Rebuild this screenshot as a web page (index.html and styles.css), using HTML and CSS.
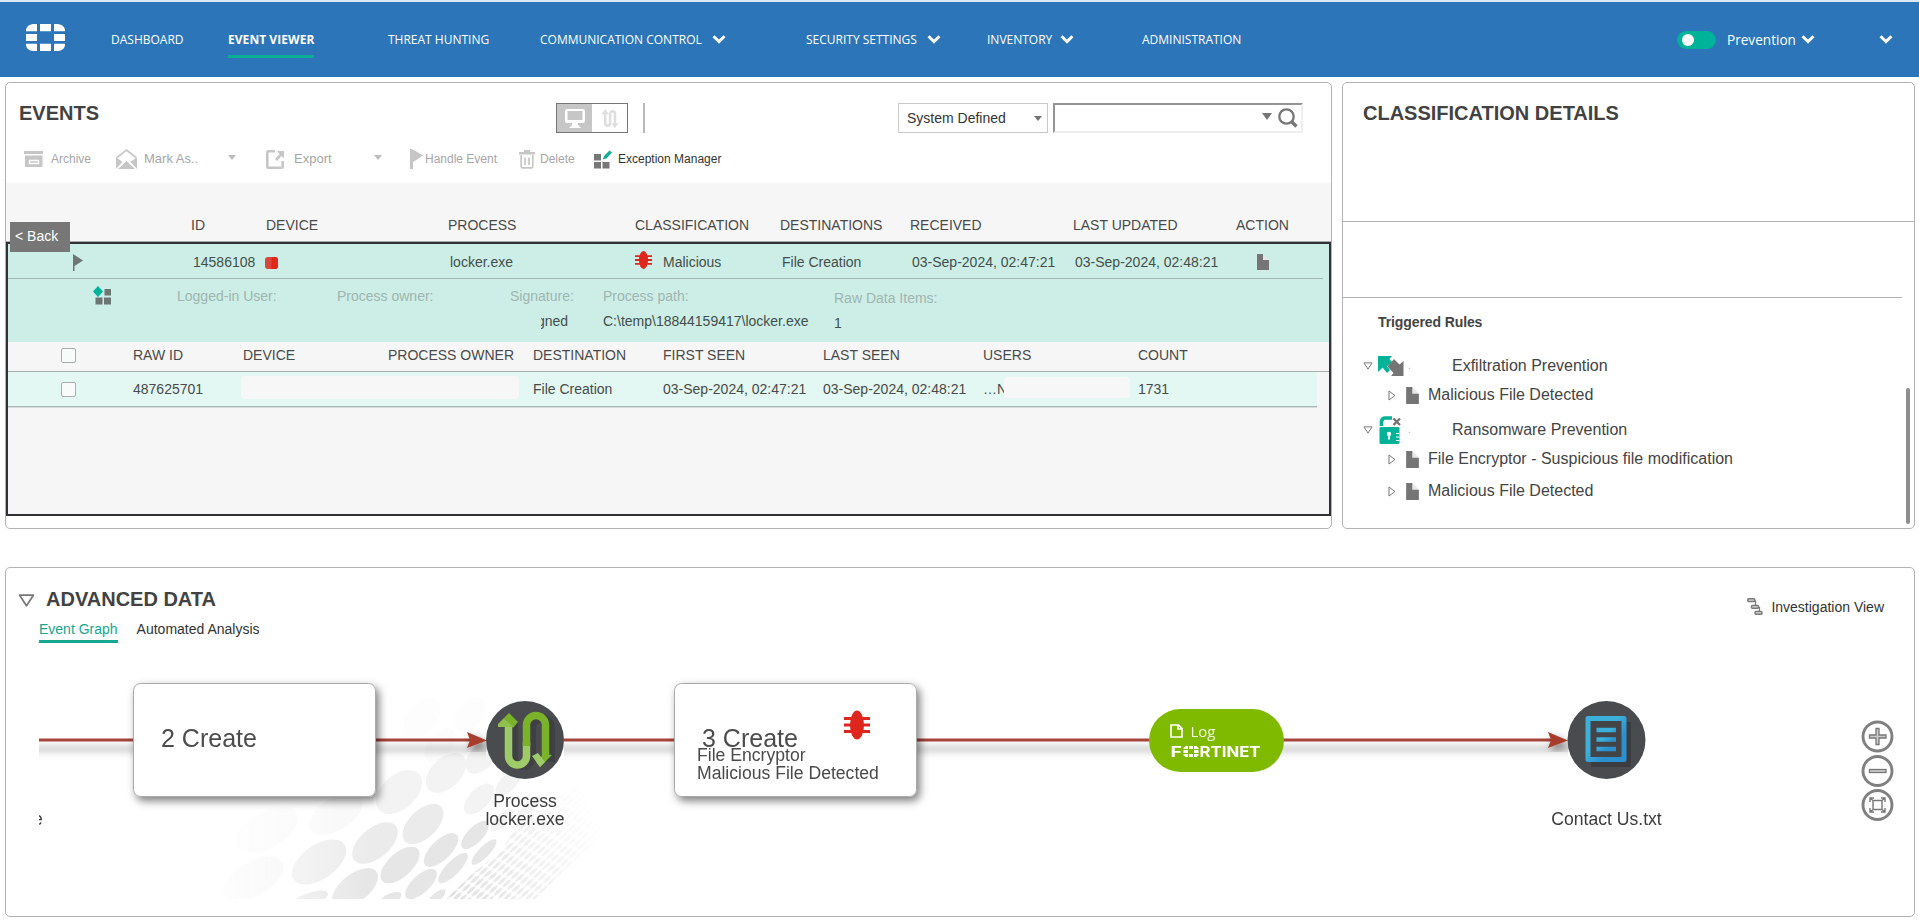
FILE: index.html
```html
<!DOCTYPE html>
<html lang="en">
<head>
<meta charset="utf-8">
<title>Event Viewer</title>
<link rel="stylesheet" href="styles.css">
</head>
<body>
<svg class="defs" width="0" height="0" aria-hidden="true">
  <symbol id="chev" viewBox="0 0 13 10"><path d="M1.400 2 6.500 7 11.600 2" fill="none" stroke="#fff" stroke-width="2.700"/></symbol>
  <symbol id="doc" viewBox="0 0 12 16"><path d="M0 0H6V6H12V16H0Z" fill="#757575"/><path d="M6 0 12 6H6Z" fill="#e6e6e6"/></symbol>
  <symbol id="bug" viewBox="0 0 26 30"><ellipse cx="13" cy="15" rx="7" ry="14.5" fill="#df261c"/><path d="M0 8.500H26M0 15H26M0 21.500H26" stroke="#df261c" stroke-width="3"/></symbol>
  <symbol id="snake" viewBox="0 0 16 18"><path d="M3.500 4V13.500a2.300 2.300 0 0 0 4.600 0V4.500a2.300 2.300 0 0 1 4.600 0V14" fill="none" stroke="#dedede" stroke-width="2.400"/><path d="M0 5 3.500 0 7 5ZM9.200 13.500H16L12.700 18Z" fill="#dedede"/></symbol>
  <symbol id="right" viewBox="0 0 8 11"><path d="M1 1V10L7 5.500Z" fill="#fff" stroke="#777"/></symbol>
  <symbol id="down" viewBox="0 0 16 12"><path d="M1.500 1H14.500L8 11Z" fill="#fff" stroke="#777" stroke-width="1.600" stroke-linejoin="round"/></symbol>
</svg>

<header class="topbar">
  <svg class="logo" width="39" height="27" viewBox="0 0 39 34" preserveAspectRatio="none"><path fill="#fff" d="M7 0H11V9H0V7Q1 1 7 0ZM14 0H25V9H14ZM28 0H32Q38 1 39 7V9H28ZM0 12.500H11V21.500H0ZM28 12.500H39V21.500H28ZM0 25H11V34H7Q1 33 0 27ZM14 25H25V34H14ZM28 25H39V27Q38 33 32 34H28Z"/></svg>
  <nav class="nav">
    <a>DASHBOARD</a>
    <a><span class="current">EVENT VIEWER</span></a>
    <a>THREAT HUNTING</a>
    <a>COMMUNICATION CONTROL<svg class="chev"><use href="#chev"/></svg></a>
    <a>SECURITY SETTINGS<svg class="chev"><use href="#chev"/></svg></a>
    <a>INVENTORY<svg class="chev"><use href="#chev"/></svg></a>
    <a>ADMINISTRATION</a>
  </nav>
  <div class="mode"><span class="switch"></span>Prevention<svg class="chev"><use href="#chev"/></svg></div>
  <svg class="chev user"><use href="#chev"/></svg>
</header>

<main class="page">
  <section class="panel events">
    <div class="head">
      <h2>EVENTS</h2>
      <div class="views">
        <span class="view on"><svg width="20" height="19" viewBox="0 0 20 19"><path fill="#fff" fill-rule="evenodd" d="M2 0H18Q20 0 20 2V12Q20 14 18 14H13V16L16 19H4L7 16V14H2Q0 14 0 12V2Q0 0 2 0ZM2.500 2V11H17.500V2Z"/></svg></span>
        <span class="view"><svg width="18" height="19"><use href="#snake"/></svg></span>
      </div>
      <i class="divider"></i>
      <div class="select">System Defined<i class="tri"></i></div>
      <div class="search"><i class="tri big"></i><svg width="20" height="20" viewBox="0 0 20 20"><circle cx="8.500" cy="8.500" r="7.200" fill="none" stroke="#777" stroke-width="2.300"/><path d="M13.500 13.500 18.500 18.500" stroke="#777" stroke-width="3.200"/></svg></div>
    </div>
    <div class="tools">
      <div><svg width="19" height="16" viewBox="0 0 19 16"><path fill="#c6c6c6" d="M0 0H19V3H0ZM1 4.500H18.500V16H1Z"/><path d="M5.500 9.500V12.500H14.500V9.500Z" fill="none" stroke="#fff" stroke-width="1.400"/></svg><span>Archive</span></div>
      <div class="t13"><svg width="21" height="20" viewBox="0 0 21 20"><path d="M1 8.500 10.500 1 20 8.500" fill="none" stroke="#c6c6c6" stroke-width="1.600"/><path fill="#c6c6c6" d="M0 8 6.500 13 0 20ZM21 8 14.500 13 21 20ZM2 20 10.500 12 19 20Z"/></svg><span>Mark As..</span><i class="tri pale"></i></div>
      <div class="t13"><svg width="19" height="19" viewBox="0 0 19 19"><path d="M9 1.300H2.500Q1.300 1.300 1.300 2.500V16.500Q1.300 17.700 2.500 17.700H15.500Q16.700 17.700 16.700 16.500V11" fill="none" stroke="#c6c6c6" stroke-width="2.600"/><path d="M11 1H18V8.500L15.500 6 11 11 9 9 13.500 4Z" fill="#c6c6c6"/></svg><span>Export</span><i class="tri pale"></i></div>
      <div><svg width="14" height="20" viewBox="0 0 14 20"><path fill="#c6c6c6" d="M0 0H2L13 6.500 3 13V20H0Z"/></svg><span>Handle Event</span></div>
      <div><svg width="16" height="19" viewBox="0 0 16 19"><path fill="#c6c6c6" d="M0 2H5V0H11V2H16V4.500H0Z"/><path d="M2.200 5V16.500Q2.200 17.900 3.500 17.900H12.500Q13.800 17.900 13.800 16.500V5M6 7.500V15M10 7.500V15" fill="none" stroke="#c6c6c6" stroke-width="1.700"/></svg><span>Delete</span></div>
      <div class="dark"><svg width="19" height="19" viewBox="0 0 19 19"><path fill="#777" d="M0 4H7V10.500H0ZM0 12H7V18.500H0ZM8.500 12H15.500V18.500H8.500Z"/><path d="M8.800 9.600 10 6 15.500 0.500 18 2.500 12.500 8.500Z" fill="#17ae92"/></svg><span>Exception Manager</span></div>
    </div>

    <div class="table">
      <div class="row cols main-head"><span></span><span>ID</span><span>DEVICE</span><span>PROCESS</span><span>CLASSIFICATION</span><span>DESTINATIONS</span><span>RECEIVED</span><span>LAST UPDATED</span><span>ACTION</span></div>
      <div class="back">&lt; Back</div>
      <div class="selected">
        <div class="row cols event">
          <span class="flag"><svg width="11" height="17" viewBox="0 0 11 17"><path fill="#6e7673" d="M0 0 10 6.500 1.500 12V17H0Z"/></svg></span>
          <span>14586108</span>
          <span><svg class="dev" width="13" height="12" viewBox="0 0 13 12"><rect width="13" height="12" rx="3" fill="#d8463c"/><path d="M6.500 0H10Q13 0 13 3V9Q13 12 10 12H6.500Z" fill="#e02718"/></svg></span>
          <span>locker.exe</span>
          <span class="mal"><svg width="17" height="18" viewBox="0 0 26 30" preserveAspectRatio="none"><ellipse cx="13" cy="15" rx="7" ry="15" fill="#df261c"/><path d="M0 8.500H26M0 15H26M0 21.500H26" stroke="#df261c" stroke-width="3"/></svg>Malicious</span>
          <span>File Creation</span><span>03-Sep-2024, 02:47:21</span><span>03-Sep-2024, 02:48:21</span>
          <span class="act"><svg width="12" height="16"><use href="#doc"/></svg></span>
        </div>
        <div class="detail">
          <span class="apps"><svg width="18" height="19" viewBox="0 0 18 19"><path fill="#00b398" d="M5 0 10 5.500 5 11 0 5.500Z"/><path fill="#6e7673" d="M11.500 3H18V9.500H11.500ZM2.500 11.500H9.500V18.500H2.500ZM11 11.500H18V18.500H11Z"/></svg></span>
          <dl><dt>Logged-in User:</dt><dd></dd></dl>
          <dl><dt>Process owner:</dt><dd></dd></dl>
          <dl><dt>Signature:</dt><dd class="cut"><span>gned</span></dd></dl>
          <dl><dt>Process path:</dt><dd>C:\temp\18844159417\locker.exe</dd></dl>
          <dl class="low"><dt>Raw Data Items:</dt><dd>1</dd></dl>
        </div>
        <div class="row sub sub-head"><span><i class="box"></i></span><span>RAW ID</span><span>DEVICE</span><span>PROCESS OWNER</span><span>DESTINATION</span><span>FIRST SEEN</span><span>LAST SEEN</span><span>USERS</span><span>COUNT</span></div>
        <div class="row sub raw"><span><i class="box"></i></span><span>487625701</span><span class="blank"></span><span>File Creation</span><span>03-Sep-2024, 02:47:21</span><span>03-Sep-2024, 02:48:21</span><span class="users">…N<i></i></span><span>1731</span></div>
      </div>
    </div>
  </section>

  <section class="panel details">
    <h2>CLASSIFICATION DETAILS</h2>
    <div class="gap"></div>
    <div class="rules">
      <h3>Triggered Rules</h3>
      <div class="rule r1"><svg width="10" height="8"><use href="#down"/></svg><svg width="26" height="20" viewBox="0 0 26 20"><path fill="#00b398" d="M0 0H14L11.500 3 14 6 9 10.500 12 14 9 17 4.500 11.500 0 16Z"/><path fill="#757575" d="M16 3 21.500 8.500 25.500 5V20H13L15.500 17 9.500 10.500Z"/></svg><small>.</small><span>Exfiltration Prevention</span></div>
      <div class="item i1"><svg width="8" height="11"><use href="#right"/></svg><svg width="13" height="17"><use href="#doc"/></svg>Malicious File Detected</div>
      <div class="rule r2"><svg width="10" height="8"><use href="#down"/></svg><svg width="26" height="28" viewBox="0 0 26 28"><path d="M3.500 10V5.500Q4 2 7.500 2H14" fill="none" stroke="#00b398" stroke-width="3.600"/><rect x="1.500" y="11" width="20" height="17" rx="1.500" fill="#00b398"/><path d="M15.500 2.500 22 9M22 2.500 15.500 9" stroke="#757575" stroke-width="2.400"/><circle cx="11" cy="18" r="2.200" fill="#fff"/><path d="M10.200 18H11.800L12 23.500H10ZM18 17H21.500V18H18ZM18 20.500H21.500V21.500H18ZM18 24H21.500V25H18Z" fill="#fff"/></svg><small>.</small><span>Ransomware Prevention</span></div>
      <div class="item i1"><svg width="8" height="11"><use href="#right"/></svg><svg width="13" height="17"><use href="#doc"/></svg>File Encryptor - Suspicious file modification</div>
      <div class="item i2"><svg width="8" height="11"><use href="#right"/></svg><svg width="13" height="17"><use href="#doc"/></svg>Malicious File Detected</div>
      <i class="thumb"></i>
    </div>
  </section>

  <section class="panel advanced">
    <div class="adv-head">
      <div>
        <h2><svg width="17" height="13"><use href="#down"/></svg>ADVANCED DATA</h2>
        <div class="tabs"><span class="tab on">Event Graph</span><span class="tab">Automated Analysis</span></div>
      </div>
      <div class="inv"><svg width="17" height="18" viewBox="0 0 17 18"><path d="M8.500 2.500V7M12.500 9V13" stroke="#777" stroke-width="1.200" fill="none"/><g fill="#ddd" stroke="#777" stroke-width="1.500"><rect x=".8" y=".8" width="7" height="2.800" rx="1"/><rect x="4.500" y="7.400" width="7" height="2.800" rx="1"/><rect x="8" y="13.400" width="7" height="2.800" rx="1"/></g></svg>Investigation View</div>
    </div>
    <svg class="graph" viewBox="39 660 1870 239" width="1870" height="239">
      <defs>
        <filter id="sh" x="-10%" y="-15%" width="125%" height="140%"><feDropShadow dx="3" dy="4" stdDeviation="4" flood-color="#000" flood-opacity=".5"/></filter>
        <filter id="soft" filterUnits="userSpaceOnUse" x="30" y="730" width="1560" height="40"><feGaussianBlur stdDeviation="0 3"/></filter>
        <linearGradient id="blue" x1="0" y1="0" x2="1" y2="1"><stop offset=".4" stop-color="#3bb0db"/><stop offset=".7" stop-color="#2c8fcf"/></linearGradient>
        <linearGradient id="fade" gradientUnits="userSpaceOnUse" x1="445" y1="890" x2="600" y2="820"><stop offset="0" stop-color="#fff"/><stop offset="1" stop-color="#fff" stop-opacity="0"/></linearGradient>
        <linearGradient id="left" gradientUnits="userSpaceOnUse" x1="200" y1="0" x2="370" y2="0"><stop offset="0" stop-color="#fff" stop-opacity="0"/><stop offset="1" stop-color="#fff"/></linearGradient>
        <mask id="fm"><rect x="400" y="750" width="240" height="150" fill="url(#fade)"/></mask>
        <mask id="lm"><rect x="180" y="660" width="460" height="240" fill="url(#left)"/></mask>
        <pattern id="fine" width="12" height="5" patternUnits="userSpaceOnUse" patternTransform="rotate(-44) skewX(18)"><ellipse cx="6" cy="2.500" rx="5.600" ry="1.600" fill="#e0e0e0"/></pattern>
      </defs>
      <g class="dots" mask="url(#lm)">
        <g opacity=".35"><ellipse transform="translate(267 830) rotate(-30)" rx="34" ry="18"/><ellipse transform="translate(336 814) rotate(-32)" rx="30" ry="16"/><ellipse transform="translate(422 718) rotate(-50)" rx="23" ry="14" opacity=".4"/><ellipse transform="translate(470 714) rotate(-50)" rx="20" ry="12" opacity=".4"/><ellipse transform="translate(440 745) rotate(-50)" rx="20" ry="12" opacity=".3"/></g>
        <g opacity=".6"><ellipse transform="translate(253 879) rotate(-30)" rx="34" ry="17"/><ellipse transform="translate(399 792) rotate(-42)" rx="27" ry="17"/><ellipse transform="translate(446 773) rotate(-44)" rx="24" ry="15"/><ellipse transform="translate(482 757) rotate(-46)" rx="20" ry="12"/><ellipse transform="translate(479 799) rotate(-46)" rx="19" ry="10"/><ellipse transform="translate(508 783) rotate(-45)" rx="16" ry="8"/><ellipse transform="translate(502 820) rotate(-46)" rx="15" ry="6"/><ellipse transform="translate(530 806) rotate(-44)" rx="14" ry="5"/></g>
        <ellipse transform="translate(319 862) rotate(-35)" rx="31" ry="17"/><ellipse transform="translate(375 843) rotate(-40)" rx="27" ry="15"/><ellipse transform="translate(423 824) rotate(-44)" rx="25" ry="14"/>
        <g fill="#e6e6e6"><ellipse transform="translate(309 900) rotate(-20)" rx="20" ry="7"/><ellipse transform="translate(355 888) rotate(-38)" rx="27" ry="14"/><ellipse transform="translate(400 865) rotate(-42)" rx="24" ry="12"/><ellipse transform="translate(441 850) rotate(-44)" rx="22" ry="10"/><ellipse transform="translate(475 835) rotate(-46)" rx="18" ry="8"/><ellipse transform="translate(388 901) rotate(-30)" rx="15" ry="6"/><ellipse transform="translate(421 884) rotate(-43)" rx="20" ry="9"/><ellipse transform="translate(453 868) rotate(-46)" rx="20" ry="7"/><ellipse transform="translate(484 852) rotate(-46)" rx="17" ry="5.500"/><ellipse transform="translate(436 898) rotate(-42)" rx="12" ry="4.500"/></g>
        <path d="M446 899 472 874 502 850 516 826 590 776 612 795 600 835 535 899Z" fill="url(#fine)" mask="url(#fm)"/>
      </g>
      <path d="M39 749H376M376 749H486M564 749H674M916 749H1568" stroke="#000" stroke-opacity=".16" stroke-width="8" filter="url(#soft)"/>
      <path d="M39 740H133M376 740H480M564 740H674M916 740H1560" stroke="#a5443a" stroke-width="2.800"/>
      <g fill="#a83e2f" filter="url(#sh)"><path d="M467 732 487 740.500 467 748 470 740ZM1548 732 1568 740.500 1548 748 1551 740Z"/></g>
      <g fill="#fff" stroke="#aaa" filter="url(#sh)"><rect x="133.500" y="683.500" width="242" height="113" rx="7"/><rect x="674.500" y="683.500" width="242" height="113" rx="7"/></g>
      <g class="big-text"><text x="161" y="747">2 Create</text><text x="702" y="747">3 Create</text></g>
      <g class="mid-text"><text x="697" y="761">File Encryptor</text><text x="697" y="779">Malicious File Detected</text></g>
      <use href="#bug" x="844" y="710" width="26" height="30"/>
      <g fill="#4a4b4f"><circle cx="525" cy="740" r="39"/><circle cx="1606.500" cy="740" r="39"/></g>
      <path d="M514 722V757a9 9 0 0 0 18 0V728a9.500 9.500 0 0 1 19 0V762" fill="none" stroke="#3f4044" stroke-width="8"/>
      <g fill="none" stroke-width="7.500"><path d="M508.500 722V756a9 9 0 0 0 18 0V742" stroke="#9fca68"/><path d="M526.500 746V725a9.500 9.500 0 0 1 19 0V757" stroke="#7ab32a"/></g>
      <path d="M509 713 518 722 513 728 504 718Z" fill="#7ab32a"/><path d="M504 718 513 727H498V724Z" fill="#8fbf4c"/><path d="M552 755 540 767 536 762 544 754Z" fill="#7ab32a"/><path d="M532 756 538 753 545 762 540 767Z" fill="#9fca68"/>
      <path d="M1591 722H1631V767H1591Z" fill="#3b3c40"/>
      <path d="M1588 718.500H1624V759.500H1588Z" fill="#434448" stroke="url(#blue)" stroke-width="5" stroke-linejoin="round"/>
      <path d="M1596.500 727.700H1616V732.300H1596.500ZM1596.500 737.200H1616V741.800H1596.500ZM1596.500 746.700H1616V751.300H1596.500Z" fill="url(#blue)"/>
      <g class="label"><text x="525" y="807">Process</text><text x="525" y="825">locker.exe</text><text x="1606.500" y="825">Contact Us.txt</text><text x="38" y="825">e</text></g>
      <rect x="1149" y="709" width="135" height="63" rx="31.500" fill="#80ba00"/>
      <path d="M1171 725H1178.500L1182 728.500V737H1171ZM1178 725V729H1182" fill="none" stroke="#fff" stroke-width="1.700"/>
      <text class="log" x="1190.500" y="737">Log</text>
      <g class="brand"><text x="1170.500" y="757" textLength="11.500" lengthAdjust="spacingAndGlyphs">F</text><text x="1199.500" y="757" textLength="61" lengthAdjust="spacingAndGlyphs">RTINET</text></g>
      <path fill="#fff" d="M1186 746H1188V749H1183.500V748ZM1189 746H1193V749H1189ZM1194 746H1196.500L1198.500 748V749H1194ZM1183.500 750H1188V753H1183.500ZM1194 750H1198.500V753H1194ZM1183.500 754H1188V757H1186L1183.500 755.500ZM1189 754H1193V757H1189ZM1194 754H1198.500V755.500L1196.500 757H1194Z"/>
      <g fill="#fff" stroke="#808080" stroke-width="2.900"><circle cx="1877.500" cy="736.500" r="14.500"/><circle cx="1877.500" cy="771" r="14.500"/><circle cx="1877.500" cy="805" r="14.500"/></g>
      <g fill="#ccc" stroke="#777" stroke-width="1.300"><path d="M1876 728.500H1879V735H1886V738H1879V744.500H1876V738H1869.500V735H1876Z"/><rect x="1869.500" y="769.500" width="16.500" height="3"/></g>
      <path d="M1873 800.500H1882V809.500H1873ZM1873 800.500 1870 798M1882 800.500 1885 798M1873 809.500 1870 812M1882 809.500 1885 812M1870 802V798H1874M1881 798H1885V802M1870 808V812H1874M1881 812H1885V808" fill="none" stroke="#777" stroke-width="1.400"/>
    </svg>
  </section>
</main>
</body>
</html>
```

FILE: styles.css
```css
* { box-sizing: border-box; }
body { margin: 0; height: 920px; overflow: hidden; background: #fff; color: #444; font: 14px/18px "Liberation Sans", Arial, sans-serif; white-space: nowrap; }
h2, h3, dl, dd { margin: 0; }
svg { display: block; flex: none; }
.defs { position: absolute; }
h2 { font-size: 20px; line-height: 24px; color: #424242; }

.topbar { display: flex; align-items: center; height: 77px; border-top: 2px solid #dbe9f5; background: #2b75b8; color: #fff; padding-left: 26px; font-family: "Open Sans", sans-serif; }
.logo { margin: 0 46px 4px 0; }
.nav { display: grid; grid-template-columns: 117px 160px 152px 266px 181px 155px 536px; font-size: 12px; }
.nav a { display: flex; align-items: center; height: 32px; }
.chev { width: 14px; height: 11px; margin-left: 10px; }
.nav a:nth-child(6) .chev { margin-left: 8px; }
.current { font-weight: 700; border-bottom: 3px solid #0aae94; padding: 9px 0 6px; letter-spacing: .05px; }
.mode { display: flex; align-items: center; font-size: 13.600px; width: 202px; margin-left: -1px; }
.mode .chev { margin-left: 5px; }
.user { margin-left: 0; }
.switch { width: 39px; height: 18px; border-radius: 9px; background: #00b398; margin-right: 11px; padding: 3px 5px; }
.switch::before { content: ""; display: block; width: 12px; height: 12px; border-radius: 50%; background: #fff; }

.page { display: grid; grid-template-columns: 1327px 573px; grid-template-rows: 447px 350px; gap: 38px 10px; padding: 5px 0 0 5px; }
.panel { border: 1px solid #b3b3b3; border-radius: 5px; background: #fff; }

.head { display: flex; align-items: center; height: 51px; padding: 0 28px 0 13px; margin-top: 10px; }
.events .head h2 { width: 537px; margin-top: -11px; }
.head > div, .divider { margin-top: -1px; height: 30px; }
.views { display: flex; width: 72px; border: 1px solid #757575; }
.view { flex: 1; display: flex; align-items: center; justify-content: center; }
.view.on { background: #c6c6c6; }
.divider { width: 2px; background: #b8b8b8; margin-left: 15px; }
.select { display: flex; align-items: center; justify-content: space-between; width: 150px; margin-left: 253px; padding: 0 5px 0 8px; border: 1px solid #c8c8c8; color: #333; }
.search { display: flex; align-items: center; justify-content: flex-end; gap: 6px; width: 250px; margin-left: 5px; padding-right: 3px; border: 2px solid; border-color: #959595 #eee #eee #959595; }
.tri { border: solid transparent; border-width: 5px 4px 0; border-top-color: #757575; }
.tri.big { border-width: 7px 5px 0; border-top-color: #757575; margin-bottom: 4px; }
.tri.pale { border-top-color: #bdbdbd; margin: -4px 0 0 auto; }

.tools { display: grid; grid-template-columns: 92px 150px 144px 109px 75px 200px; height: 39px; align-items: start; padding: 4px 0 0 18px; font-size: 12px; color: #a6a6a6; }
.tools div { display: flex; align-items: center; height: 22px; gap: 8px; padding-right: 31px; }
.tools .t13 { font-size: 13px; gap: 7px; padding-right: 30px; }
.tools .t13:nth-child(3) { gap: 9px; padding-right: 28px; }
.tools div:nth-child(4) { gap: 1px; }
.tools div:nth-child(5), .tools div:nth-child(6) { gap: 5px; padding: 0; }
.tools .dark { color: #333; }

.table { position: relative; height: 333px; background: #f6f6f6; }
.row { display: grid; align-items: center; }
.cols { grid-template-columns: 185px 75px 182px 187px 145px 130px 163px 163px 90px; }
.main-head { height: 59px; padding-top: 25px; border-bottom: 1px solid #aaa; color: #4a4a4a; }
.back { position: absolute; z-index: 1; left: 4px; top: 39px; width: 60px; height: 30px; padding-left: 5px; line-height: 29px; background: #777; color: #fff; }
.selected { height: 274px; border: 2px solid #303236; background: #f6f6f6; }
.event { position: relative; height: 34px; padding-top: 2px; background: #cceee7; color: #444e4b; grid-template-columns: 185px 72px 185px 185px 147px 130px 163px 182px 66px; }
.event::after { content: ""; position: absolute; left: 0; right: 6px; bottom: -1px; height: 1px; background: #a3b5b1; }
.flag { padding-left: 65px; }
.dev { margin-top: 1px; }
.mal { display: flex; align-items: center; gap: 11px; }
.mal svg { margin-top: -4px; }
.detail { display: grid; grid-template-columns: 169px 160px 173px 93px 231px 300px; height: 64px; padding-top: 9px; background: #cceee7; }
.apps { padding-left: 85px; margin-top: -1px; }
.detail dt { color: #9fb5b0; height: 25px; }
.detail dd { color: #444e4b; }
.detail .low { padding-top: 2px; }
.cut { overflow: hidden; margin-left: 31px; }
.cut span { margin-left: -4px; }
.sub { grid-template-columns: 125px 110px 145px 145px 130px 160px 160px 155px 150px; color: #4a4a4a; }
.sub-head { height: 30px; padding-bottom: 3px; border-bottom: 1px solid #a8b0ae; }
.raw { height: 35px; margin-right: 12px; background: #e3f7f3; border-bottom: 1px solid #a9b8b5; box-shadow: 0 1px #d6dad9; }
.box { display: block; width: 15px; height: 15px; margin-left: 53px; border: 1px solid #a9adac; border-radius: 2px; background: #f9fbfa; }
.blank { grid-column: span 2; width: 278px; height: 23px; margin: -4px 0 0 -2px; background: #f7f7f7; border-radius: 4px; }
.users { display: flex; align-items: center; }
.users i { width: 126px; height: 21px; margin: -4px 0 0 -3px; background: #f7f7f7; border-radius: 3px; }

.details h2 { height: 139px; padding: 18px 0 0 20px; border-bottom: 1px solid #b3b3b3; }
.gap { height: 76px; margin-right: 12px; border-bottom: 1px solid #b3b3b3; }
.rules { position: relative; }
.rules h3 { padding: 15px 0 0 35px; font-size: 14px; line-height: 18px; letter-spacing: -.1px; }
.rule, .item { display: flex; align-items: center; font-size: 16px; height: 32px; }
.rule { padding-left: 20px; gap: 5px; }
.rule small { width: 39px; margin-left: -1px; font-size: 10px; color: #aaa; }
.r1 { margin-top: 19px; }
.item { padding-left: 45px; margin-top: -3px; }
.item svg + svg { margin: 0 9px 0 10px; }
.r2 { margin-top: 3px; }
.i2 { margin-top: 0; }
.thumb { position: absolute; right: 4px; top: 90px; width: 4px; height: 136px; border-radius: 2px; background: #8e8e8e; }

.advanced { grid-column: 1 / 3; padding: 19px 0 0; }
.adv-head { display: flex; justify-content: space-between; height: 73px; padding: 0 30px 0 12px; }
.adv-head h2 { display: flex; align-items: center; gap: 11px; }
.adv-head h2 svg { margin-top: 3px; }
.tabs { display: flex; gap: 19px; padding: 9px 0 0 21px; }
.tab { height: 23px; line-height: 18px; color: #333; }
.tab.on { color: #17a68f; border-bottom: 3px solid #17a68f; }
.inv { display: flex; align-items: center; gap: 7px; height: 40px; color: #333; }
.graph { margin-left: 33px; font-family: "Liberation Sans", Arial, sans-serif; }
.dots { fill: #ebebeb; }
.big-text { font-size: 25px; fill: #4c4c4c; }
.mid-text { font-size: 17.600px; fill: #4a4a4a; }
.label { font-size: 17.600px; fill: #3c3c3c; text-anchor: middle; }
.log { font: 15px "Open Sans", sans-serif; fill: #f0f7dc; }
.brand { font: 700 15px "Inter", sans-serif; fill: #fff; }
```
